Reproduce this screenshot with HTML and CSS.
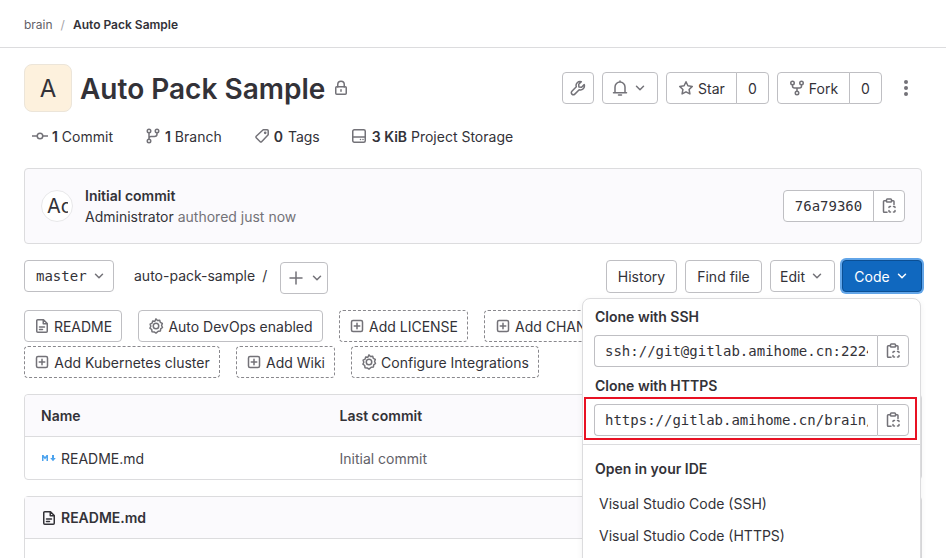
FILE: index.html
```html
<!DOCTYPE html>
<html lang="en">

<head>
    <meta charset="utf-8">
    <meta name="viewport" content="width=device-width, initial-scale=1.0">
    <title>Auto Pack Sample</title>
    <link rel="stylesheet" href="styles.css">
</head>

<body>

    <svg class="sprites" width="0" height="0">
        <symbol id="i-lock" viewBox="0 0 16 16"><path d="M4.75 7V4.5a3.25 3.25 0 0 1 6.5 0V7"/><rect x="2.75" y="6.75" width="10.5" height="7.5" rx="1"/><path d="M8 9.75v1.5"/></symbol>
        <symbol id="i-commit" viewBox="0 0 16 16"><circle cx="8" cy="8" r="2.75"/><path d="M0 8h5.25M10.75 8H16"/></symbol>
        <symbol id="i-branch" viewBox="0 0 16 16"><circle cx="4" cy="3" r="1.75"/><circle cx="4" cy="13" r="1.75"/><circle cx="12" cy="3" r="1.75"/><path d="M4 4.75v6.5M12 4.75V6a2.5 2.5 0 0 1-2.5 2.5H6A2 2 0 0 0 4 10.5"/></symbol>
        <symbol id="i-tag" viewBox="0 0 16 16"><path d="M9.2 1.75h4a1 1 0 0 1 1 1v4L7.6 13.7a1 1 0 0 1-1.4 0L2.2 9.7a1 1 0 0 1 0-1.4z"/><circle cx="11.2" cy="4.8" r=".6"/></symbol>
        <symbol id="i-disk" viewBox="0 0 16 16"><rect x="1.75" y="1.75" width="12.5" height="12.5" rx="1.5"/><path d="M1.75 9h12.5M9.5 11.6h.01M12 11.6h.01"/></symbol>
        <symbol id="i-wrench" viewBox="0 0 16 16"><path d="M14.2 4.6 11.6 7.2 8.9 6.9 8.7 4.3 11.3 1.7a4 4 0 0 0-5 5.1L1.9 11.2a2 2 0 0 0 2.9 2.9L9.2 9.7a4 4 0 0 0 5-5.1z"/></symbol>
        <symbol id="i-bell" viewBox="0 0 16 16"><path d="M1.5 12.75h13M3 12.75V7a5 5 0 0 1 10 0v5.75M6.5 15h3M8 1v1"/></symbol>
        <symbol id="i-star" viewBox="0 0 16 16"><path d="m8 1.8 1.9 4 4.4.6-3.2 3.1.8 4.4L8 11.8l-3.9 2.1.8-4.4-3.2-3.1 4.4-.6z"/></symbol>
        <symbol id="i-fork" viewBox="0 0 16 16"><circle cx="3.5" cy="3" r="1.75"/><circle cx="12.5" cy="3" r="1.75"/><circle cx="8" cy="13" r="1.75"/><path d="M3.5 4.75V6a2 2 0 0 0 2 2h5a2 2 0 0 0 2-2V4.75M8 8v3.25"/></symbol>
        <symbol id="i-chevron" viewBox="0 0 16 16"><path d="m4.5 6.25 3.5 3.5 3.5-3.5"/></symbol>
        <symbol id="i-copy" viewBox="0 0 16 16"><path d="M5 2.75H3.25a.75.75 0 0 0-.75.75v10a.75.75 0 0 0 .75.75H6M11 2.75h1.25a.75.75 0 0 1 .75.75V6.5"/><rect x="5.5" y=".9" width="5" height="3.2" rx=".8"/><path d="M8 9.5v-.25a.75.75 0 0 1 .75-.75h.75M12.5 8.5h.75a.75.75 0 0 1 .75.75v.25M14 12.5v.75a.75.75 0 0 1-.75.75h-.75M9.5 14h-.75a.75.75 0 0 1-.75-.75v-.75"/></symbol>
        <symbol id="i-doc" viewBox="0 0 16 16"><path d="M9.5 1.75H3.75a1 1 0 0 0-1 1v10.5a1 1 0 0 0 1 1h8.500a1 1 0 0 0 1-1V5.500zM9.250 2v3.750H13M5.500 9h5M5.500 11.500h3"/></symbol>
        <symbol id="i-gear" viewBox="0 0 16 16"><path d="M8 .9 9.500 2.500l2.200-.2.600 2.100 2 1-.7 2.100.9 2-1.800 1.300-.3 2.200-2.200.2L8 15.100l-1.800-1.200-2.200-.2-.3-2.200L1.900 10.200l.9-2-.7-2.100 2-1 .6-2.100 2.200.2z"/><circle cx="8" cy="8" r="2.750"/></symbol>
        <symbol id="i-plus-square" viewBox="0 0 16 16"><rect x="2.500" y="2.500" width="11" height="11" rx="1.500"/><path d="M8 5.250v5.500M5.250 8h5.500"/></symbol>
        <symbol id="i-plus" viewBox="0 0 16 16"><path d="M8 2v12M2 8h12"/></symbol>
    </svg>

    <div class="page">

        <nav class="crumbs">
            <a>brain</a>
            <span class="crumb-sep">/</span>
            <strong>Auto Pack Sample</strong>
        </nav>

        <div class="content">

            <header class="project-head">
                <div class="project-avatar">A</div>
                <h1>Auto Pack Sample</h1>
                <svg class="icon lock"><use href="#i-lock"/></svg>
                <div class="project-actions">
                    <button class="btn btn-icon"><svg class="icon"><use href="#i-wrench"/></svg></button>
                    <button class="btn btn-bell"><svg class="icon"><use href="#i-bell"/></svg><svg class="icon chev"><use href="#i-chevron"/></svg></button>
                    <div class="btn-group count-star">
                        <button class="btn"><svg class="icon"><use href="#i-star"/></svg>Star</button>
                        <button class="btn btn-count">0</button>
                    </div>
                    <div class="btn-group count-fork">
                        <button class="btn"><svg class="icon"><use href="#i-fork"/></svg>Fork</button>
                        <button class="btn btn-count">0</button>
                    </div>
                    <div class="kebab"><span></span><span></span><span></span></div>
                </div>
            </header>

            <ul class="stats">
                <li class="stat-commit"><svg class="icon"><use href="#i-commit"/></svg><b>1</b> Commit</li>
                <li class="stat-branch"><svg class="icon"><use href="#i-branch"/></svg><b>1</b> Branch</li>
                <li class="stat-tag"><svg class="icon"><use href="#i-tag"/></svg><b>0</b> Tags</li>
                <li class="stat-disk"><svg class="icon"><use href="#i-disk"/></svg><b>3 KiB</b> Project Storage</li>
            </ul>

            <section class="commit-box">
                <div class="commit-avatar"><span>Ad</span></div>
                <div class="commit-text">
                    <strong>Initial commit</strong>
                    <p>Administrator <span>authored just now</span></p>
                </div>
                <div class="btn-group commit-sha">
                    <button class="btn mono">76a79360</button>
                    <button class="btn btn-copy"><svg class="icon"><use href="#i-copy"/></svg></button>
                </div>
            </section>

            <div class="tree-bar">
                <button class="btn mono branch-btn">master<svg class="icon chev"><use href="#i-chevron"/></svg></button>
                <span class="tree-path">auto-pack-sample</span>
                <span class="tree-sep">/</span>
                <button class="btn btn-add"><svg class="icon"><use href="#i-plus"/></svg><svg class="icon chev"><use href="#i-chevron"/></svg></button>
                <div class="tree-actions">
                    <button class="btn btn-tall btn-history">History</button>
                    <button class="btn btn-tall btn-find">Find file</button>
                    <button class="btn btn-edit">Edit<svg class="icon chev"><use href="#i-chevron"/></svg></button>
                    <button class="btn btn-code">Code<svg class="icon chev"><use href="#i-chevron"/></svg></button>
                </div>
            </div>

            <div class="shortcuts">
                <div class="shortcut-row">
                    <a class="btn sc-readme"><svg class="icon"><use href="#i-doc"/></svg>README</a>
                    <a class="btn sc-devops"><svg class="icon"><use href="#i-gear"/></svg>Auto DevOps enabled</a>
                    <a class="btn dashed sc-license"><svg class="icon"><use href="#i-plus-square"/></svg>Add LICENSE</a>
                    <a class="btn dashed"><svg class="icon"><use href="#i-plus-square"/></svg>Add CHANGELOG</a>
                </div>
                <div class="shortcut-row">
                    <a class="btn dashed sc-k8s"><svg class="icon"><use href="#i-plus-square"/></svg>Add Kubernetes cluster</a>
                    <a class="btn dashed sc-wiki"><svg class="icon"><use href="#i-plus-square"/></svg>Add Wiki</a>
                    <a class="btn dashed sc-config"><svg class="icon"><use href="#i-gear"/></svg>Configure Integrations</a>
                </div>
            </div>

            <section class="file-table">
                <div class="file-row file-head">
                    <b>Name</b>
                    <b>Last commit</b>
                </div>
                <div class="file-row">
                    <span class="file-name"><svg class="md-icon" viewBox="0 0 16 16"><path d="M1 11V5h1.500L4 7l1.500-2H7v6H5.500V7.500L4 9.500 2.500 7.500V11zM11 5h2v3h1.800L12 11.300 9.200 8H11z"/></svg>README.md</span>
                    <span class="file-commit">Initial commit</span>
                </div>
            </section>

            <section class="readme-box">
                <div class="readme-head"><svg class="icon"><use href="#i-doc"/></svg>README.md</div>
            </section>

        </div>

        <!-- clone dropdown, open over the page -->
        <div class="clone-menu">
            <h5>Clone with SSH</h5>
            <div class="clone-field">
                <div class="clone-url"><span>ssh://git@gitlab.amihome.cn:2224/brain/auto-pack-sample.git</span></div>
                <button class="btn btn-copy"><svg class="icon"><use href="#i-copy"/></svg></button>
            </div>
            <h5 class="https-title">Clone with HTTPS</h5>
            <div class="clone-field">
                <div class="clone-url"><span>https://gitlab.amihome.cn/brain/auto-pack-sample.git</span></div>
                <button class="btn btn-copy"><svg class="icon"><use href="#i-copy"/></svg></button>
            </div>
            <div class="clone-divider"></div>
            <h5 class="ide-title">Open in your IDE</h5>
            <a class="ide-link">Visual Studio Code (SSH)</a>
            <a class="ide-link">Visual Studio Code (HTTPS)</a>
        </div>

        <div class="annotation"></div>

    </div>

</body>

</html>
```

FILE: styles.css
```css
* {
    box-sizing: border-box;
}

html,
body {
    margin: 0;
    height: 558px;
    overflow: hidden;
}

body {
    font-family: 'Inter', 'Noto Sans', sans-serif;
    font-size: 14px;
    color: #333238;
    background-color: white;
}

.sprites {
    position: absolute;
}

.page {
    position: relative;
    height: 558px;
    overflow: hidden;
}

.icon {
    width: 16px;
    height: 16px;
    flex: none;
    fill: none;
    stroke: #737278;
    stroke-width: 1.5;
    stroke-linecap: round;
    stroke-linejoin: round;
}

/* buttons */

.btn {
    display: inline-flex;
    align-items: center;
    justify-content: center;
    height: 32px;
    padding: 0 10px;
    background-color: white;
    border: 1px solid #bfbfc3;
    border-radius: 4px;
    font-family: inherit;
    font-size: 14px;
    color: #333238;
    white-space: nowrap;
}

.btn.mono {
    font-family: 'DejaVu Sans Mono', 'Liberation Mono', monospace;
}

.btn-group {
    display: flex;
}

.btn-group .btn:first-child {
    border-radius: 4px 0 0 4px;
}

.btn-group .btn:last-child {
    border-radius: 0 4px 4px 0;
    margin-left: -1px;
}

.dashed {
    border: 1px dashed #89888d;
}

/* breadcrumb */

.crumbs {
    display: flex;
    align-items: center;
    height: 48px;
    padding: 1px 0 0 24px;
    border-bottom: 1px solid #dcdcde;
    font-size: 12px;
}

.crumbs a {
    color: #626168;
}

.crumb-sep {
    margin: 0 8px;
    color: #a4a3a8;
}

.crumbs strong {
    font-weight: 600;
}

.content {
    padding: 16px 24px 0;
}

/* project header */

.project-head {
    display: flex;
    align-items: center;
    height: 48px;
}

.project-avatar {
    display: flex;
    align-items: center;
    justify-content: center;
    width: 48px;
    height: 48px;
    background-color: #fdf1dd;
    border: 1px solid #ece5d9;
    border-radius: 8px;
    font-size: 24px;
}

.project-head h1 {
    margin: 1px 0 0 8px;
    font-size: 28px;
    font-weight: 600;
}

.lock {
    margin-left: 8px;
}

.project-actions {
    display: flex;
    align-items: center;
    gap: 8px;
    margin-left: auto;
}

.project-actions .icon {
    margin-right: 4px;
}

.btn-icon {
    width: 32px;
    padding: 0;
}

.project-actions .btn-icon .icon {
    margin: 0;
}

.btn-bell {
    width: 56px;
    padding: 0;
}

.project-actions .btn-bell .icon {
    margin: 0 2px;
}

.count-star .btn:first-child {
    width: 71px;
    padding: 0;
}

.count-fork .btn:first-child {
    width: 73px;
    padding: 0;
}

.btn-count {
    width: 33px;
    padding: 0;
}

.kebab {
    display: flex;
    flex-direction: column;
    align-items: center;
    gap: 2px;
    width: 32px;
}

.kebab span {
    width: 4px;
    height: 4px;
    border-radius: 50%;
    background-color: #737278;
}

/* stats */

.stats {
    display: flex;
    align-items: center;
    list-style: none;
    height: 22px;
    margin: 13px 0 0;
    padding: 0 0 0 8px;
}

.stats li {
    display: flex;
    align-items: center;
    white-space: pre;
}

.stats b {
    font-weight: 600;
}

.stats .icon {
    margin-right: 4px;
}

.stat-branch,
.stat-tag {
    margin-left: 32px;
}

.stat-tag b {
    margin-right: 1px;
}

.stat-disk {
    margin-left: 31px;
}

.stat-disk .icon {
    margin-right: 5px;
}

/* last commit */

.commit-box {
    display: flex;
    align-items: center;
    height: 76px;
    margin-top: 21px;
    padding: 0 16px;
    background-color: #fbfafd;
    border: 1px solid #dcdcde;
    border-radius: 4px;
}

.commit-avatar {
    width: 32px;
    height: 32px;
    padding-left: 5px;
    background-color: white;
    border: 1px solid #e8e8ea;
    border-radius: 50%;
    font-size: 20px;
    line-height: 30px;
}

.commit-avatar span {
    display: block;
    width: 21px;
    overflow: hidden;
}

.commit-text {
    margin-left: 12px;
    line-height: 21px;
}

.commit-text strong {
    font-weight: 600;
}

.commit-text p {
    margin: 0;
}

.commit-text span {
    color: #737278;
}

.commit-sha {
    margin-left: auto;
}

.commit-sha .btn:first-child {
    width: 91px;
    padding: 0;
}

.btn-copy {
    width: 32px;
    padding: 0;
}

/* repo toolbar */

.tree-bar {
    display: flex;
    align-items: flex-start;
    height: 34px;
    margin-top: 16px;
}

.branch-btn {
    justify-content: flex-start;
    width: 90px;
    padding: 0 0 0 11px;
}

.branch-btn .icon {
    margin-left: 4px;
}

.tree-path {
    margin-left: 20px;
    line-height: 32px;
}

.tree-sep {
    margin-left: 7px;
    line-height: 32px;
}

.btn-add {
    justify-content: flex-start;
    width: 48px;
    margin: 2px 0 0 13px;
    padding: 0 0 0 7px;
}

.btn-add .chev {
    margin-left: 5px;
}

.tree-actions {
    display: flex;
    gap: 8px;
    margin-left: auto;
}

.btn-tall {
    height: 33px;
}

.btn-history {
    width: 71px;
    padding: 0;
}

.btn-find {
    width: 77px;
    padding: 0;
}

.btn-edit {
    width: 65px;
    padding: 0;
}

.tree-actions .chev {
    margin-left: 4px;
}

.btn-code {
    width: 80px;
    margin-left: -1px;
    padding: 0;
    background-color: #1068bf;
    border-color: #0b4f94;
    color: white;
    box-shadow: 0 0 0 2px #62a5e8;
}

.btn-code .icon {
    stroke: white;
}

/* shortcut buttons */

.shortcuts {
    display: flex;
    flex-direction: column;
    gap: 4px;
    margin-top: 16px;
}

.shortcut-row {
    display: flex;
    gap: 16px;
}

.shortcuts .icon {
    margin-right: 4px;
}

.sc-readme {
    width: 98px;
    padding: 0;
}

.sc-devops {
    width: 185px;
    padding: 0;
}

.sc-license {
    width: 129px;
    padding: 0;
}

.sc-k8s {
    width: 196px;
    padding: 0;
}

.sc-wiki {
    width: 99px;
    padding: 0;
}

.sc-config {
    width: 188px;
    padding: 0;
}

/* file table */

.file-table {
    margin-top: 16px;
    border: 1px solid #dcdcde;
    border-radius: 4px;
}

.file-row {
    display: grid;
    grid-template-columns: 298.5px 1fr;
    align-items: center;
    height: 42px;
    padding: 0 16px;
}

.file-head {
    background-color: #fbfafd;
    border-bottom: 1px solid #dcdcde;
    border-radius: 4px 4px 0 0;
}

.file-head b {
    font-weight: 600;
}

.file-name {
    display: flex;
    align-items: center;
}

.md-icon {
    width: 16px;
    height: 16px;
    margin-right: 4px;
    fill: #4ca3ee;
}

.file-commit {
    color: #626168;
}

/* readme */

.readme-box {
    height: 120px;
    margin-top: 16px;
    border: 1px solid #dcdcde;
    border-radius: 4px;
}

.readme-head {
    display: flex;
    align-items: center;
    height: 42px;
    padding: 0 16px;
    background-color: #fbfafd;
    border-bottom: 1px solid #dcdcde;
    font-weight: 600;
}

.readme-head .icon {
    margin-right: 4px;
    stroke: #333238;
}

/* clone dropdown */

.clone-menu {
    position: absolute;
    left: 582px;
    top: 298px;
    width: 339px;
    height: 300px;
    padding: 8px 12px;
    background-color: white;
    border: 1px solid #dcdcde;
    border-radius: 8px;
    box-shadow: 0 2px 6px rgba(0, 0, 0, 0.06);
}

.clone-menu h5 {
    margin: 0;
    font-size: 14px;
    font-weight: 600;
    line-height: 20px;
}

.clone-field {
    display: flex;
    width: 315px;
    margin: 8px 0 8px -1px;
}

.clone-url {
    flex: 1;
    min-width: 0;
    height: 32px;
    padding: 0 9px 0 10px;
    border: 1px solid #bfbfc3;
    border-right: 0;
    border-radius: 4px 0 0 4px;
    font-family: 'DejaVu Sans Mono', 'Liberation Mono', monospace;
    line-height: 30px;
}

.clone-url span {
    display: block;
    overflow: hidden;
    white-space: nowrap;
}

.clone-field .btn-copy {
    border-radius: 0 4px 4px 0;
}

.clone-menu .https-title {
    margin-top: 9px;
}

.clone-divider {
    height: 1px;
    margin: 8px -12px 0;
    background-color: #dcdcde;
}

.clone-menu .ide-title {
    margin-top: 14px;
}

.ide-link {
    display: block;
    margin-top: 12px;
    padding-left: 4px;
    line-height: 20px;
}

.ide-title + .ide-link {
    margin-top: 15px;
}

/* red box drawn over the https field */

.annotation {
    position: absolute;
    left: 584px;
    top: 397px;
    width: 333px;
    height: 43px;
    border: 2px solid #e81123;
}
```
